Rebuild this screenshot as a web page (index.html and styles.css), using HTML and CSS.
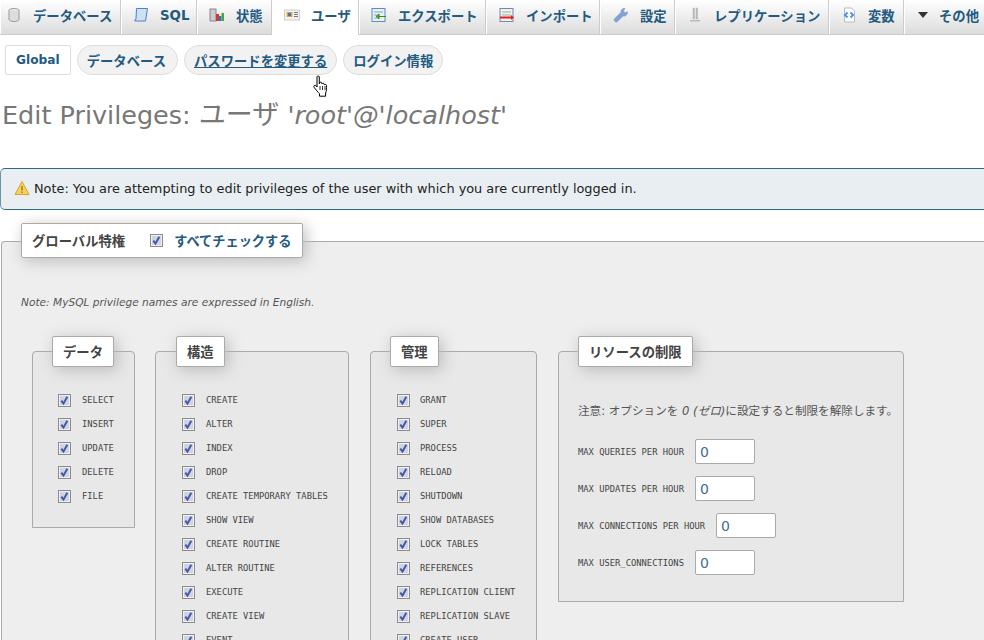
FILE: index.html
```html
<!DOCTYPE html>
<html lang="ja">
<head>
<meta charset="utf-8">
<title>phpMyAdmin</title>
<link rel="stylesheet" href="styles.css">
</head>
<body>
<svg class="defs" width="0" height="0" aria-hidden="true">
  <symbol id="chk" viewBox="0 0 13 13">
    <rect x=".5" y=".5" width="12" height="12" fill="#dfe2ec" stroke="#8c8c8c"/>
    <rect x="1.5" y="1.5" width="10" height="10" fill="#cfd3e2" stroke="#eef0f6"/>
    <path d="M3.3 6.6 5.5 9.6 9.3 2.8" fill="none" stroke="#3f55a5" stroke-width="1.9"/>
  </symbol>
</svg>

<nav class="tabs">
  <a class="tab t1"><svg class="ic" viewBox="0 0 16 16"><ellipse cx="8" cy="3.5" rx="5" ry="2" fill="#eee" stroke="#999"/><path d="M3 3.5v9c0 1.100 2.200 2 5 2s5-.9 5-2v-9" fill="#ddd" stroke="#999"/></svg>データベース</a>
  <a class="tab t2"><svg class="ic" viewBox="0 0 16 16"><path d="M3.500 1.500h11l-2 12.500h-11l1.500-2z" fill="#cfe0f5" stroke="#4d80c0"/></svg>SQL</a>
  <a class="tab t3"><svg class="ic" viewBox="0 0 16 16"><rect x="1" y="2" width="6" height="12" fill="#ccc" stroke="#888"/><rect x="7" y="7" width="3" height="7" fill="#d33"/><rect x="10" y="9" width="2.500" height="5" fill="#27c"/><rect x="12.500" y="6" width="2.500" height="8" fill="#4a3"/></svg>状態</a>
  <a class="tab t4 active"><svg class="ic" viewBox="0 0 16 16"><rect x=".5" y="3" width="15" height="10" fill="#f4f4f4" stroke="#ccc"/><rect x="2.500" y="5" width="6" height="5" fill="#e9a23c"/><rect x="4" y="6" width="3" height="3" fill="#3b78c4"/><path d="M10 5.500h4M10 7.500h4M10 9.500h4" stroke="#777"/></svg>ユーザ</a>
  <a class="tab t5"><svg class="ic" viewBox="0 0 16 16"><rect x="1" y="1.500" width="13" height="13" fill="#e8f1f8" stroke="#5a8ebc"/><path d="M3 5h9M3 8h3M3 11h3" stroke="#8ab"/><path d="M15 9.500H8M8 7v5L5 9.500z" fill="#5aab2c" stroke="#3b8a18"/></svg>エクスポート</a>
  <a class="tab t6"><svg class="ic" viewBox="0 0 16 16"><rect x="1" y="1.500" width="13" height="13" fill="#f6eef0" stroke="#6a8cb0"/><path d="M3 5h9M3 8h9" stroke="#8b9"/><path d="M1 10.500h11" stroke="#e02020" stroke-width="2"/><path d="M12 8v5l3-2.500z" fill="#e02020"/></svg>インポート</a>
  <a class="tab t7"><svg class="ic" viewBox="0 0 16 16"><path d="M2 14.500c-1.300-1-1-2.200 0-3.200l6-6c-.5-2 1-4 4-4l-1.500 2.500 1.500 2 2.500-1c.3 3-2 5-4.500 4.300l-5.500 5.400c-.8.700-1.700.8-2.500 0z" fill="#7fa3d8" stroke="#8d9cb5" stroke-width=".6"/></svg>設定</a>
  <a class="tab t8"><svg class="ic" viewBox="0 0 16 16"><path d="M6 1h1.500v11H6zM9 1h1.500v11H9z" fill="#bbb" stroke="#aaa" stroke-width=".4"/><path d="M3 13h10v1.500H3z" fill="#bbb"/></svg>レプリケーション</a>
  <a class="tab t9"><svg class="ic" viewBox="0 0 16 16"><path d="M3.500 1h7l3 3v11h-10z" fill="#fff" stroke="#bbb"/><path d="M6.500 5.500 4 8l2.500 2.500M9.500 5.500 12 8l-2.500 2.500" fill="none" stroke="#4f94e0" stroke-width="2"/></svg>変数</a>
  <a class="tab t10"><span class="caret"></span>その他</a>
</nav>

<div class="subtabs">
  <a class="pill current">Global</a>
  <a class="pill db">データベース</a>
  <a class="pill hover">パスワードを変更する</a>
  <a class="pill">ログイン情報</a>
</div>
<svg class="cursor" viewBox="0 0 18 24" width="18" height="24"><path d="M5 1.800c0-1 2.300-1 2.300 0v7l.2-1c.5-1 2-.8 2.200.2l.2.800c.4-.9 2-.8 2.200.3l.1.700c.5-.8 2.200-.6 2.300.7.200 2.500.1 5.500-.9 7.500v3.200H7.500v-2.500c-1.500-1.500-3.500-3.800-5.500-6.500-.9-1.300.9-2.600 2-1.500L5 12z" fill="#fff" stroke="#000" stroke-width="1"/><path d="M8 11v4M10.500 11v4M13 11v4" stroke="#000" stroke-width=".8"/></svg>

<h2 class="title">Edit Privileges: <span class="title-jp">ユーザ</span> <i>'root'@'localhost'</i></h2>

<div class="notice"><svg class="warn" viewBox="0 0 16 16"><path d="M8 1.500 15 14.500H1z" fill="#f6d25a" stroke="#d8a23a"/><path d="M8 6v4.500M8 11.500v1.500" stroke="#a87b20" stroke-width="1.500"/></svg>Note: You are attempting to edit privileges of the user with which you are currently logged in.</div>

<fieldset class="outer">
  <legend class="legend main">
    <span class="legend-title">グローバル特権</span>
    <svg class="box check-all"><use href="#chk"/></svg>
    <span class="check-all-label">すべてチェックする</span>
  </legend>
  <p class="english">Note: MySQL privilege names are expressed in English.</p>
  <div class="groups">
    <fieldset class="group g1">
      <legend class="legend">データ</legend>
      <div class="row"><svg class="box"><use href="#chk"/></svg><code>SELECT</code></div>
      <div class="row"><svg class="box"><use href="#chk"/></svg><code>INSERT</code></div>
      <div class="row"><svg class="box"><use href="#chk"/></svg><code>UPDATE</code></div>
      <div class="row"><svg class="box"><use href="#chk"/></svg><code>DELETE</code></div>
      <div class="row"><svg class="box"><use href="#chk"/></svg><code>FILE</code></div>
    </fieldset>
    <fieldset class="group g2">
      <legend class="legend">構造</legend>
      <div class="row"><svg class="box"><use href="#chk"/></svg><code>CREATE</code></div>
      <div class="row"><svg class="box"><use href="#chk"/></svg><code>ALTER</code></div>
      <div class="row"><svg class="box"><use href="#chk"/></svg><code>INDEX</code></div>
      <div class="row"><svg class="box"><use href="#chk"/></svg><code>DROP</code></div>
      <div class="row"><svg class="box"><use href="#chk"/></svg><code>CREATE TEMPORARY TABLES</code></div>
      <div class="row"><svg class="box"><use href="#chk"/></svg><code>SHOW VIEW</code></div>
      <div class="row"><svg class="box"><use href="#chk"/></svg><code>CREATE ROUTINE</code></div>
      <div class="row"><svg class="box"><use href="#chk"/></svg><code>ALTER ROUTINE</code></div>
      <div class="row"><svg class="box"><use href="#chk"/></svg><code>EXECUTE</code></div>
      <div class="row"><svg class="box"><use href="#chk"/></svg><code>CREATE VIEW</code></div>
      <div class="row"><svg class="box"><use href="#chk"/></svg><code>EVENT</code></div>
    </fieldset>
    <fieldset class="group g3">
      <legend class="legend">管理</legend>
      <div class="row"><svg class="box"><use href="#chk"/></svg><code>GRANT</code></div>
      <div class="row"><svg class="box"><use href="#chk"/></svg><code>SUPER</code></div>
      <div class="row"><svg class="box"><use href="#chk"/></svg><code>PROCESS</code></div>
      <div class="row"><svg class="box"><use href="#chk"/></svg><code>RELOAD</code></div>
      <div class="row"><svg class="box"><use href="#chk"/></svg><code>SHUTDOWN</code></div>
      <div class="row"><svg class="box"><use href="#chk"/></svg><code>SHOW DATABASES</code></div>
      <div class="row"><svg class="box"><use href="#chk"/></svg><code>LOCK TABLES</code></div>
      <div class="row"><svg class="box"><use href="#chk"/></svg><code>REFERENCES</code></div>
      <div class="row"><svg class="box"><use href="#chk"/></svg><code>REPLICATION CLIENT</code></div>
      <div class="row"><svg class="box"><use href="#chk"/></svg><code>REPLICATION SLAVE</code></div>
      <div class="row"><svg class="box"><use href="#chk"/></svg><code>CREATE USER</code></div>
    </fieldset>
    <fieldset class="group g4">
      <legend class="legend">リソースの制限</legend>
      <p class="limit-note">注意: オプションを <i>0</i> <i>(ゼロ)</i>に設定すると制限を解除します。</p>
      <div class="limit"><code>MAX QUERIES PER HOUR</code><input class="num" value="0"></div>
      <div class="limit"><code>MAX UPDATES PER HOUR</code><input class="num" value="0"></div>
      <div class="limit"><code>MAX CONNECTIONS PER HOUR</code><input class="num" value="0"></div>
      <div class="limit"><code>MAX USER_CONNECTIONS</code><input class="num" value="0"></div>
    </fieldset>
  </div>
</fieldset>
</body>
</html>
```

FILE: styles.css
```css
html, body { margin: 0; padding: 0; height: 640px; overflow: hidden; background: #fff; }
body {
  position: relative;
  font-family: "DejaVu Sans", "Noto Sans CJK JP", sans-serif;
  font-size: 13px;
  color: #444;
}
.defs { position: absolute; }

.tabs {
  display: flex;
  height: 34px;
  border-bottom: 1px solid #ccc;
  background: linear-gradient(#fff, #dcdcdc);
}
.tab {
  display: flex;
  align-items: center;
  box-sizing: border-box;
  height: 34px;
  padding-bottom: 4px;
  border-right: 1px solid #ccc;
  box-shadow: inset 1px 0 0 #fff;
  color: #235a81;
  font-size: 13.330px;
  font-weight: bold;
  white-space: nowrap;
}
.tab .ic { width: 16px; height: 16px; flex: none; margin-right: 11px; }
.t1 { width: 121px; padding-left: 6px; }
.t2 { width: 76px; padding-left: 12px; }
.t3 { width: 75px; padding-left: 12px; }
.t4 { width: 87px; padding-left: 12px; }
.t5 { width: 127px; padding-left: 12px; }
.t6 { width: 114px; padding-left: 13px; }
.t7 { width: 75px; padding-left: 13px; }
.t8 { width: 154px; padding-left: 12px; }
.t9 { width: 75px; padding-left: 12px; }
.t10 { flex: 1; padding-left: 14px; border-right: 0; }
.t4.active { background: #fff; height: 35px; padding-bottom: 5px; }
.caret {
  width: 0; height: 0; margin-right: 11px; flex: none;
  border-left: 5px solid transparent; border-right: 5px solid transparent; border-top: 6px solid #333;
}

.subtabs { display: flex; gap: 6px; margin: 10px 0 0 5px; height: 30px; }
.pill {
  display: flex;
  align-items: center;
  box-sizing: border-box;
  height: 30px;
  padding: 0 9px;
  background: #f2f2f2;
  border: 1px solid #ddd;
  border-radius: 15px;
  color: #235a81;
  font-size: 13.330px;
  font-weight: bold;
  white-space: nowrap;
}
.pill.current { background: #fff; border-radius: 2px; padding: 0 10px; font-size: 12.200px; }
.pill.db { padding-right: 11px; }
.pill.hover { text-decoration: underline; }
.cursor { position: absolute; left: 312px; top: 75px; }

.title {
  margin: 20px 0 0 2px;
  height: 40px;
  line-height: 40px;
  font-size: 25.500px;
  font-weight: normal;
  color: #777;
  white-space: nowrap;
}
.title-jp { font-size: 27px; }

.notice {
  display: flex;
  align-items: center;
  box-sizing: border-box;
  margin-top: 33px;
  height: 42px;
  padding: 0 0 2px 13px;
  background: #e8eef1;
  border: 1px solid #2f6b7c;
  border-left-color: #6b97a2;
  border-right: 0;
  border-radius: 5px 0 0 5px;
  color: #222;
  font-size: 12.870px;
  white-space: nowrap;
}
.warn { width: 16px; height: 16px; margin-right: 4px; flex: none; }

fieldset { margin: 0; padding: 0; min-width: 0; }
.outer {
  box-sizing: border-box;
  margin: 14px 0 0 1px;
  height: 416px;
  padding: 0 0 0 20px;
  background: #eee;
  border: 1px solid #aaa;
  border-width: 1px 0 0 1px;
  border-radius: 4px 0 0 0;
}
.legend {
  box-sizing: border-box;
  display: flex;
  align-items: center;
  justify-content: center;
  height: 31px;
  padding: 0 10px;
  background: #fff;
  border: 1px solid #aaa;
  border-radius: 2px;
  box-shadow: 3px 3px 15px #bbb;
  color: #444;
  font-size: 13.330px;
  font-weight: bold;
  white-space: nowrap;
}
.legend.main { position: relative; top: -1px; height: 35px; width: 282px; justify-content: flex-start; margin-left: -1px; }
.legend-title { margin-right: 25px; }
.box { width: 13px; height: 13px; flex: none; }
.check-all-label { margin-left: 11px; color: #235a81; font-size: 13.200px; }

.english {
  margin: 37px 0 0 -1px;
  height: 16px;
  font-size: 10.600px;
  font-style: italic;
  color: #555;
}
.groups {
  display: flex;
  align-items: flex-start;
  box-sizing: border-box;
  height: 330px;
  margin-left: -20px;
  padding: 24px 0 0 30px;
  overflow: hidden;
}
.group {
  box-sizing: border-box;
  flex: none;
  padding: 21px 0 0 26px;
  background: #e8e8e8;
  border: 1px solid #aaa;
  border-radius: 4px 4px 0 0;
}
.group .legend { margin-left: -6px; }
.g1 { width: 103px; height: 192px; margin-right: 20px; padding-left: 25px; }
.g2 { width: 194px; height: 400px; margin-right: 21px; }
.g3 { width: 167px; height: 400px; margin-right: 21px; }
.g3 .legend { margin-left: -7px; }
.g3 .row .box { margin-right: 10px; }
.g4 { width: 346px; height: 266px; padding: 15px 0 0 19px; }
.g4 .legend { margin-left: 0; }
.row { display: flex; align-items: center; height: 24px; }
.row .box { margin-right: 11px; }
code {
  font-family: "DejaVu Sans Mono", "Liberation Mono", monospace;
  font-size: 8.800px;
  color: #444;
  white-space: pre;
}
.limit-note { margin: 19px 0 0 0; height: 20px; line-height: 20px; font-size: 11.600px; color: #555; white-space: nowrap; }
.limit { display: flex; align-items: center; height: 37px; }
.limit-note + .limit { margin-top: 12px; }
.num {
  box-sizing: border-box;
  width: 60px;
  height: 25px;
  margin-left: 11px;
  padding: 0 4px;
  background: #fff;
  border: 1px solid #aaa;
  border-radius: 2px;
  color: #3d6f96;
  font-family: "DejaVu Sans", sans-serif;
  font-size: 14px;
  outline: 0;
}
```
